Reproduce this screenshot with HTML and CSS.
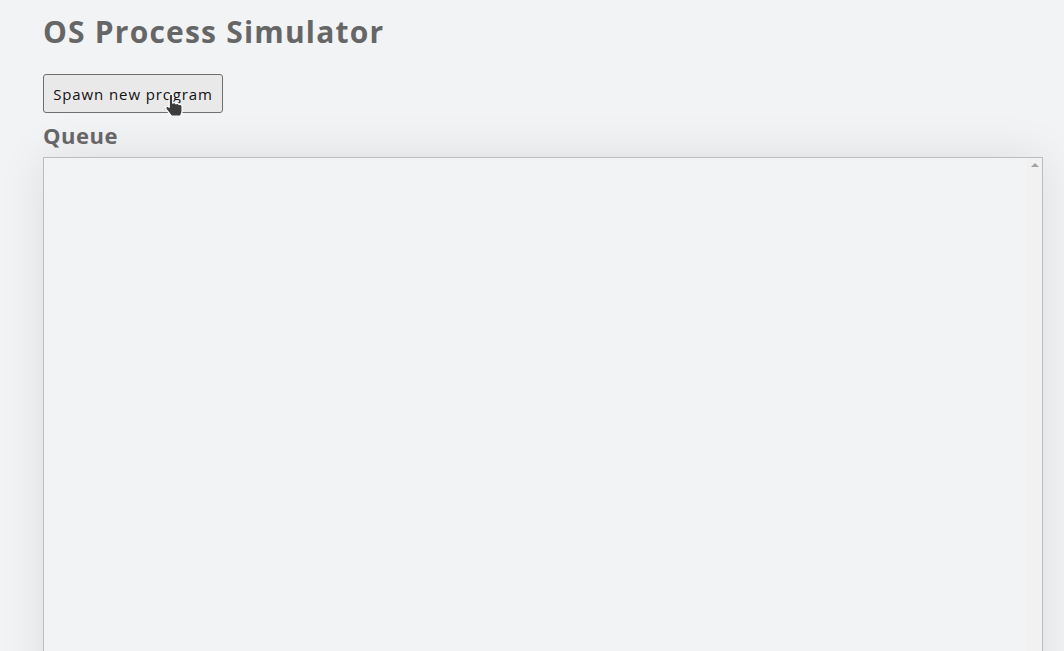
FILE: index.html
```html
<!DOCTYPE html>
<html>
<head>
<meta charset="utf-8">
<link rel="stylesheet" href="styles.css">
</head>
<body>
<div class="page">
  <h1 class="title">OS Process Simulator</h1>
  <div class="actions">
    <button class="spawn">Spawn new program</button>
    <svg class="cursor" width="22" height="26" viewBox="0 0 22 26">
      <path d="M8 1c1 0 1.8.8 1.8 1.8v7.4c.4-.5 1-.7 1.6-.6.8.1 1.3.6 1.5 1.2.4-.4 1-.6 1.6-.5.8.1 1.3.7 1.5 1.3.4-.3 1-.4 1.5-.3 1 .2 1.6 1 1.6 2v4.5c0 2.200-.6 3.8-1.6 5.4H8.5L3.2 16.4c-.7-.9-.6-2 .2-2.6.8-.6 1.9-.5 2.6.2l.2.2V2.8C6.2 1.8 7 1 8 1z" fill="#3c3c3c" stroke="#ffffff" stroke-width="1.3" stroke-linejoin="round"/>
    </svg>
  </div>
  <h2 class="heading">Queue</h2>
  <div class="queue">
    <div class="queue-content"></div>
    <div class="scrollbar"><span class="arrow-up"></span></div>
  </div>
</div>
</body>
</html>
```
FILE: styles.css
```css
html, body {
  margin: 0;
  padding: 0;
  background: #f2f3f5;
  overflow: hidden;
}
.page {
  padding: 12px 0 0 43px;
  font-family: "Open Sans", "Liberation Sans", sans-serif;
  color: #666666;
}
.title {
  margin: 0;
  font-size: 30px;
  line-height: 40px;
  font-weight: 700;
  letter-spacing: 1.2px;
}
.actions {
  position: relative;
  margin-top: 22px;
  height: 39px;
}
.spawn {
  height: 39px;
  width: 180px;
  padding: 0;
  font-family: "Open Sans", "Liberation Sans", sans-serif;
  font-size: 15px;
  letter-spacing: 0.9px;
  color: #111111;
  background: #e9e9e9;
  border: 1px solid #6f6f6f;
  border-radius: 3px;
}
.cursor {
  position: absolute;
  left: 120px;
  top: 19px;
}
.heading {
  margin: 6px 0 0 0;
  font-size: 22px;
  line-height: 32px;
  font-weight: 700;
  letter-spacing: 0.5px;
}
.queue {
  margin-top: 6px;
  width: 998px;
  height: 600px;
  display: flex;
  border: 1px solid #bdbdbd;
  background: #f2f3f5;
  box-shadow: 0 0 45px rgba(0, 0, 0, 0.09);
}
.queue-content {
  flex: 1;
}
.scrollbar {
  width: 15px;
  background: #f1f1f1;
  display: flex;
  justify-content: center;
  padding-top: 5px;
  box-sizing: border-box;
}
.arrow-up {
  width: 0;
  height: 0;
  border-left: 4px solid transparent;
  border-right: 4px solid transparent;
  border-bottom: 4px solid #a3a3a3;
}
```
